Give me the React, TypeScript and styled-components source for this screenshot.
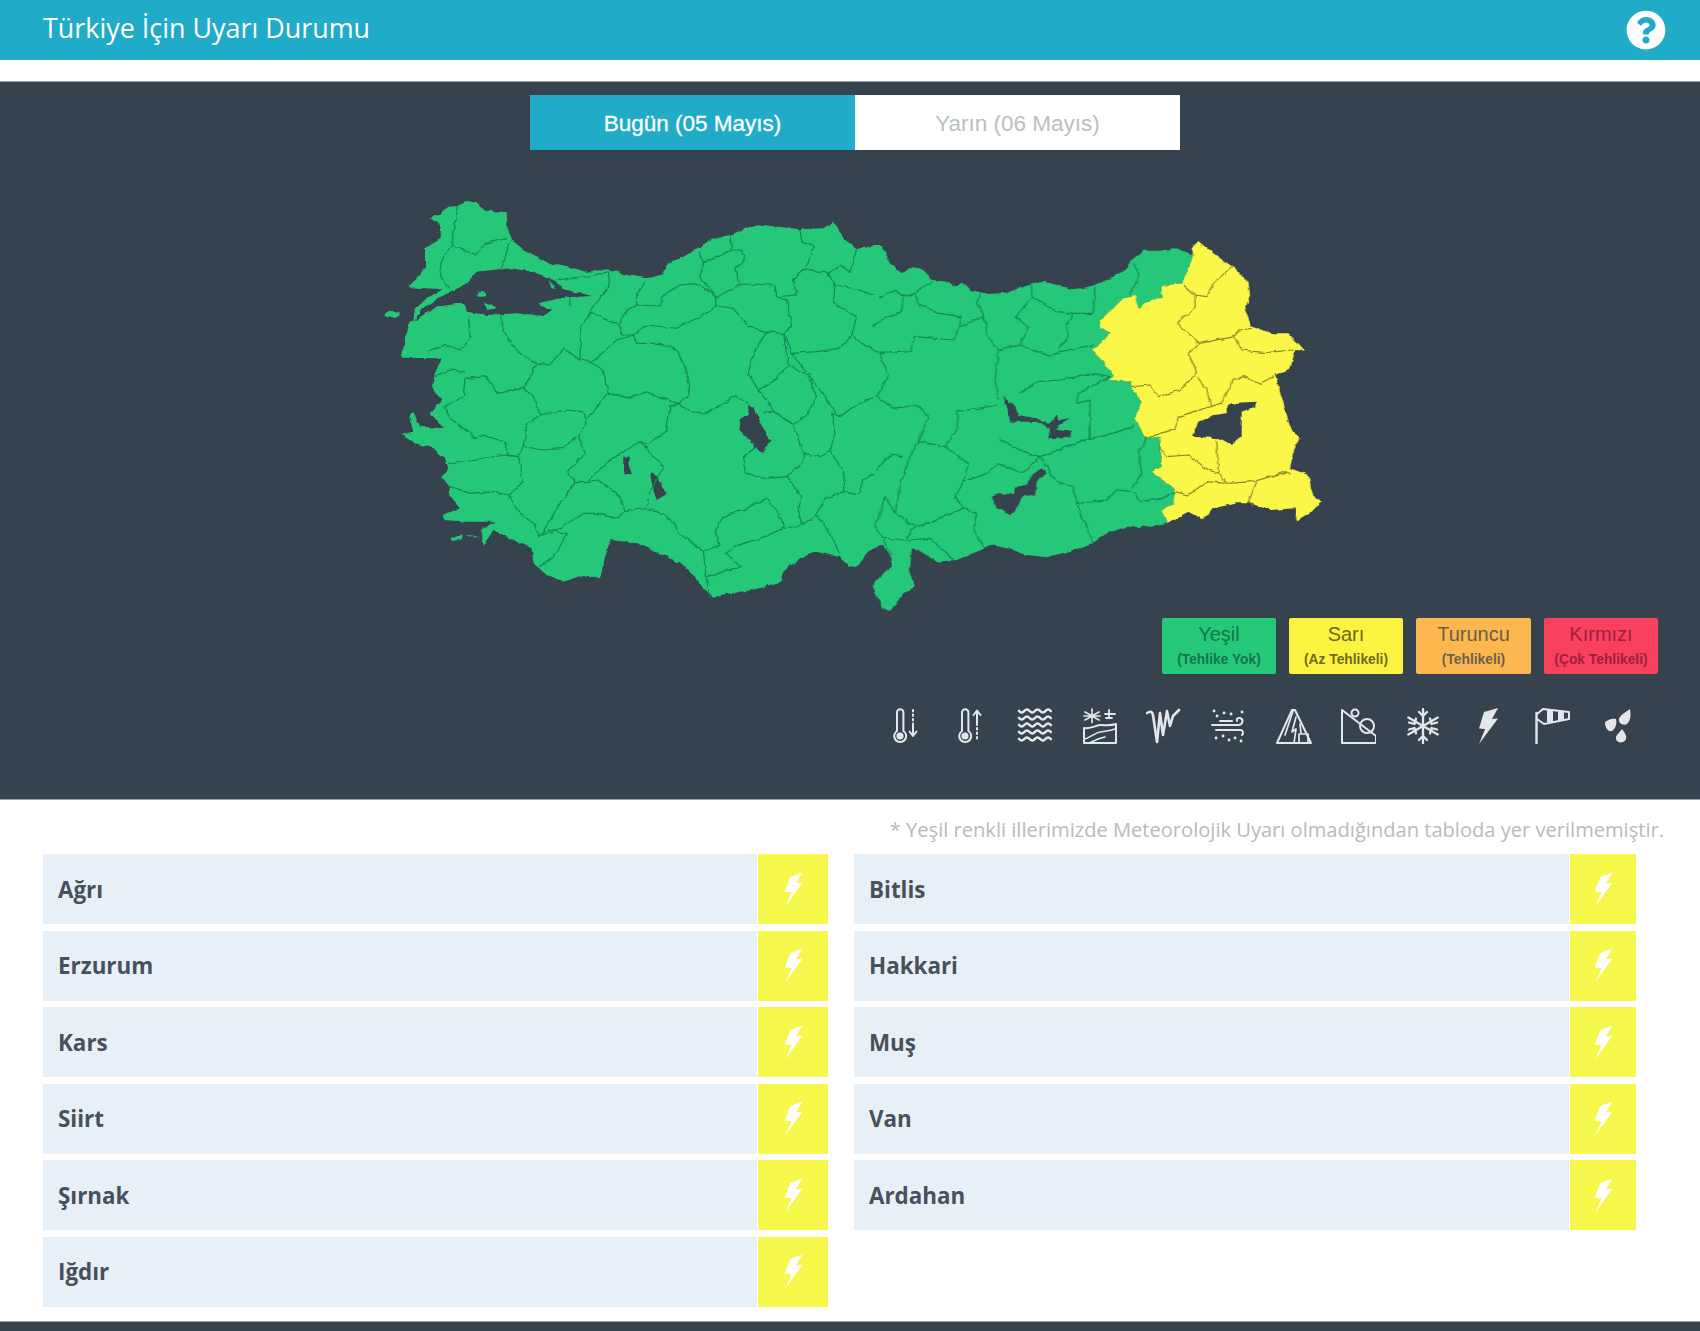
import styled, { createGlobalStyle } from "styled-components";
import { FaQuestionCircle } from "react-icons/fa";

const dark = "#37424f";

const GlobalStyle = createGlobalStyle`
  * { box-sizing: border-box; }
  html, body { margin: 0; padding: 0; background: #fff; }
  body { font-family: "Open Sans", sans-serif; width: 1700px; height: 1331px; overflow: hidden; }
`;

// outline + province lines are traced in crop coordinates, so they sit in a scaled group
const westLand =
  "M178 112 205 105 235 80 262 78 290 63 320 70 345 92 410 96 412 140 425 180 460 208 510 235 545 255 565 252 600 262 650 275 715 268 770 285 830 295 875 285 890 255 940 230 985 205 1020 180 1080 165 1160 133 1290 148 1360 145 1390 125 1405 140 1420 175 1460 208 1520 195 1540 195 1540 1095 1490 1115 1470 1155 1435 1160 1405 1130 1335 1115 1290 1135 1240 1175 1230 1205 1150 1230 1050 1245 1030 1250 1000 1225 975 1190 930 1150 870 1120 800 1090 725 1080 710 1110 690 1195 640 1185 580 1205 530 1185 490 1150 485 1105 420 1075 370 1050 340 1098 335 1050 375 1025 290 1025 225 1020 218 1005 270 985 235 945 240 920 215 895 235 865 225 835 190 805 135 790 95 765 130 755 118 710 130 695 150 740 225 745 180 700 215 660 190 630 190 590 215 535 95 533 110 450 122 430 130 420 135 385 165 358 218 328 115 322 165 265 165 205 215 175 205 130Z";

const westWater = [
  "M320 275 420 265 490 275 540 295 590 330 670 348 590 352 520 365 505 375 550 390 525 408 440 400 350 405 290 395 285 372 258 372 200 380 150 412 130 425 140 410 155 388 210 352 240 335 290 310Z",
  "M1135 675 1155 685 1165 720 1190 760 1205 780 1175 820 1155 800 1130 775 1105 750 1108 720 1135 700Z",
  "M840 880 865 890 878 925 895 940 860 960 848 925Z",
  "M760 830 780 830 775 850 785 885 768 885 760 855Z",
];

const westLines = [
  "M262 78 255 140 245 195 215 240 208 285 240 325",
  "M245 195 285 210 320 225 345 190 412 175",
  "M420 185 395 265",
  "M295 410 300 470 270 510 225 493 175 515",
  "M395 405 400 455 440 510 490 548 540 555 580 505 630 540",
  "M555 300 600 295 650 290 715 275 720 320 665 385 660 395 700 415 750 437",
  "M600 350 600 380",
  "M660 395 632 445 630 540 665 548 740 480 790 465",
  "M830 300 800 340 800 375 755 405 750 437 755 465 790 465",
  "M800 375 870 378 880 345 930 315 980 310 1040 350 1040 378 1000 405 920 445 830 435 790 465 800 490 870 490 920 510 945 560 960 640 925 670 860 650 830 635 780 655 715 640 700 570 665 548",
  "M925 670 960 695 1010 700 1060 670 1095 650 1135 670",
  "M715 640 650 720 625 770 645 820 590 875 615 905 650 905 685 900 715 920 750 950 765 995 825 985 835 960",
  "M650 905 720 840 810 785 880 860 835 945",
  "M810 785 835 795 890 750 900 680 925 670",
  "M500 555 460 625 490 650 510 705 470 735 460 800 445 830 410 825 410 790 340 765 320 775 240 715 225 680 280 650 285 595 350 590 385 640 460 625",
  "M510 705 590 690 640 695 650 720",
  "M460 800 520 810 580 805 620 770",
  "M190 590 240 570 285 575",
  "M235 850 300 840 410 825 445 830 460 905 415 945 370 935 300 940 255 925 240 920",
  "M415 945 450 1000 490 1030 510 1070 570 970 615 905",
  "M510 1070 535 1050 590 1060 560 1120 510 1160",
  "M535 1050 545 1060 640 1000 680 1000 740 1015 765 995",
  "M825 985 890 1005 930 1060 1000 1115 1008 1190 1020 1250",
  "M1000 1115 1050 1095 1035 1050 1060 1010 1130 985 1190 955 1235 1015 1240 1045 1295 1035 1285 990 1295 950 1250 890 1180 895 1130 880 1120 830 1160 800",
  "M1240 1045 1170 1075 1090 1100 1070 1120 1110 1160 1010 1190",
  "M1295 1035 1340 1005 1375 1050 1410 1120",
  "M1340 1005 1365 955 1420 935 1465 945 1480 900 1535 865",
  "M1250 890 1300 850 1300 820 1350 830 1380 815 1420 870 1425 935",
  "M1180 700 1215 695 1270 735 1300 820",
  "M1380 815 1395 760 1385 700 1410 710 1450 680 1515 650 1535 620",
  "M1165 630 1215 600 1255 555 1315 590 1340 650 1310 705 1270 735 1215 695 1165 630 1135 580 1150 520 1190 455 1240 460 1255 555",
  "M1040 378 1090 385 1135 440 1190 455",
  "M1040 350 1115 312 1215 315 1220 350 1250 360 1265 440 1240 460 1265 520 1340 515 1410 505 1445 465 1460 410 1390 370 1395 315 1375 280 1410 255 1440 275 1460 208",
  "M1265 520 1320 590 1400 700",
  "M1220 350 1280 345 1270 300 1300 265 1375 280",
  "M1290 148 1295 185 1330 200 1310 260",
  "M1080 165 1085 210 1000 250 985 215",
  "M1000 250 990 290 1040 350",
  "M1085 210 1115 210 1125 240 1095 270 1110 310",
  "M1395 315 1470 330 1535 355",
  "M1445 465 1490 500 1535 520",
];

const eastLand =
  "M40 195 60 195 75 215 90 250 125 280 160 258 190 270 215 300 260 305 290 320 308 308 330 330 385 342 440 338 515 312 550 305 590 315 640 328 690 320 740 300 790 275 815 240 850 212 900 212 950 205 1000 225 985 265 965 310 905 318 905 350 860 368 835 385 825 348 790 355 760 385 720 420 720 445 748 458 735 480 695 510 730 545 760 590 745 600 812 605 815 625 845 665 825 720 860 775 900 770 900 800 905 860 875 875 915 905 945 925 940 970 905 990 920 1030 860 1040 800 1040 740 1060 690 1095 640 1110 560 1132 500 1125 440 1105 390 1095 350 1115 290 1140 230 1145 175 1110 155 1105 150 1170 165 1220 130 1240 90 1295 65 1280 38 1215 70 1180 95 1160 90 1125 70 1095 40 1100Z";

const yellowLand =
  "M1015 183 1040 205 1080 235 1125 265 1165 305 1170 345 1155 390 1175 440 1240 460 1285 460 1315 490 1335 512 1305 510 1290 570 1245 585 1265 650 1290 740 1318 775 1300 815 1290 865 1345 885 1360 950 1385 965 1350 1000 1310 1025 1305 985 1230 990 1170 970 1130 970 1060 985 1030 1020 985 995 920 1030 905 990 940 970 945 925 915 905 875 875 905 860 900 770 860 775 825 720 845 665 815 625 812 605 745 600 760 590 730 545 695 510 735 480 748 458 720 445 720 420 760 385 790 355 825 348 835 385 860 368 905 350 905 318 965 310 985 265 1000 225 995 205Z";

const eastWater = [
  "M1100 680 1130 668 1190 665 1185 680 1145 695 1145 770 1115 795 1080 775 995 770 1015 725 1060 705 1100 700Z",
  "M430 650 465 680 475 705 530 715 565 735 590 705 595 720 630 715 595 735 590 750 635 755 630 770 565 775 570 745 530 725 470 725 450 725 445 695Z",
  "M545 865 560 880 530 905 525 950 490 945 465 990 450 1005 410 985 395 950 425 940 460 945 470 920 500 915 515 885Z",
];

const eastLines = [
  "M60 355 105 330 130 350 125 395 65 420 40 440",
  "M130 350 165 340 215 305",
  "M165 345 180 375 240 400 300 410 300 440 345 420 370 405 350 370 360 340",
  "M40 510 60 520 150 515 165 470 280 480 300 440",
  "M370 405 385 470 415 510 480 495 570 528 600 515 700 495",
  "M515 312 515 350 590 395 640 400 700 400 705 320",
  "M515 355 465 410 505 440 480 495",
  "M640 400 620 435 625 470 600 505",
  "M415 510 405 600 415 660",
  "M415 675 290 695 295 740 255 800 175 785 205 710 175 675 100 685 50 650 85 590 60 520",
  "M175 785 150 830 125 900 105 1000 165 1040 140 1075",
  "M125 830 90 825 50 870",
  "M255 800 325 850 310 905 285 950 310 985 220 1025 170 1040",
  "M310 905 380 880 410 850 490 880 540 830 660 785 725 770 820 740",
  "M415 775 490 815 540 830",
  "M480 640 530 605 600 600 700 580 750 590 655 640 650 670 690 660 690 730 690 780",
  "M540 830 590 905 640 920 650 970 740 960 770 930 820 935 840 965 910 955 945 935",
  "M860 775 835 820 845 880 815 925",
  "M650 970 700 1090",
  "M310 985 350 1000 340 1050 370 1105",
  "M45 1040 75 950 105 1000",
  "M45 1040 70 1075 140 1080 210 1075 280 1140",
  "M70 1080 95 1125",
  "M820 250 840 285 808 345",
];

const yellowLines = [
  "M1115 260 1060 310 1040 350 1005 345 970 315",
  "M1005 345 1005 385 950 430 1020 490 1120 470 1140 450 1175 445",
  "M1020 490 985 520 1010 575 1000 590 960 630 895 650 870 615 815 620",
  "M1120 470 1145 510 1215 518 1300 510",
  "M1010 590 1040 625 1052 680 955 710 945 745 860 775",
  "M1052 680 1085 670 1120 600 1150 590 1200 610 1240 590",
  "M900 800 920 830 985 825 1045 870 1075 880",
  "M1070 780 1075 880 1100 910 1180 905 1280 875 1290 885",
  "M1100 910 1040 905 985 945 945 935",
  "M1190 905 1165 965 1180 980",
];

const MapWrap = styled.svg`
  display: block;
  width: 970px;
  height: 432px;
  margin: 30px 0 0 370px;
  flex: none;
`;

const Land = styled.path<{ $fill: string }>`
  fill: ${(p) => p.$fill};
`;

const Water = styled.path`
  fill: ${dark};
`;

const Border = styled.path<{ $stroke: string }>`
  fill: none;
  stroke: ${(p) => p.$stroke};
  stroke-width: 3.6;
  stroke-linejoin: round;
`;

const TurkeyMap = () => (
  <MapWrap viewBox="370 180 970 432">
    <defs>
      <filter id="rough" x="-5%" y="-5%" width="110%" height="110%" colorInterpolationFilters="sRGB">
        <feTurbulence type="fractalNoise" baseFrequency="0.14" numOctaves="2" seed="4" result="n" />
        <feDisplacementMap in="SourceGraphic" in2="n" scale="4" xChannelSelector="R" yChannelSelector="G" />
      </filter>
    </defs>
    <g filter="url(#rough)">
      <g transform="translate(370 180) scale(0.33333)">
        <Land $fill="#25c878" d={westLand} />
        {westWater.map((d) => (
          <Water key={d} d={d} />
        ))}
        <ellipse cx="67" cy="403" rx="22" ry="10" fill="#25c878" />
        <ellipse cx="335" cy="343" rx="13" ry="7" fill="#25c878" />
        <Land $fill="#25c878" d="M345 365 385 385 350 390Z" />
        <Land $fill="#25c878" d="M535 300 560 325 545 322Z" />
        <Land $fill="#25c878" d="M238 1075 275 1066 272 1078 245 1084Z" />
        <Land $fill="#25c878" d="M292 1064 330 1072 300 1072Z" />
        {westLines.map((d) => (
          <Border key={d} $stroke="#128a58" d={d} />
        ))}
      </g>
      <g transform="translate(860 180) scale(0.33333)">
        <Land $fill="#25c878" d={eastLand} />
        <Land $fill="#fbf749" d={yellowLand} />
        {eastWater.map((d) => (
          <Water key={d} d={d} />
        ))}
        {eastLines.map((d) => (
          <Border key={d} $stroke="#128a58" d={d} />
        ))}
        {yellowLines.map((d) => (
          <Border key={d} $stroke="#8a8826" d={d} />
        ))}
      </g>
    </g>
  </MapWrap>
);

const IconSvg = styled.svg`
  width: 36px;
  height: 36px;
  flex: none;
  fill: none;
  stroke: #e4e7ea;
  stroke-width: 2;
  stroke-linecap: round;
  stroke-linejoin: round;
`;

const Solid = styled.path`
  fill: #e4e7ea;
  stroke: none;
`;

const hazardIcons = [
  // cold
  <>
    <path d="M10 23V4.5a3.2 3.2 0 0 1 6.4 0V23a6 6 0 1 1-6.4 0Z" />
    <circle cx="13" cy="28" r="2.6" fill="#e4e7ea" />
    <path d="M26 2v14" strokeDasharray="1.5 3" />
    <path d="M26 17v10M22.5 23.5 26 28l3.5-4.5" />
  </>,
  // heat
  <>
    <path d="M10 23V4.5a3.2 3.2 0 0 1 6.4 0V23a6 6 0 1 1-6.4 0Z" />
    <circle cx="13" cy="28" r="2.6" fill="#e4e7ea" />
    <path d="M25 3v14M21.5 7 25 2.5 28.5 7" />
    <path d="M25 20v12" strokeDasharray="1.5 3" />
  </>,
  // fog
  <g strokeWidth="2.6">
    {[3, 10, 17, 24, 31].map((y) => (
      <path key={y} d={`M2 ${y}q2.7 3 5.3 0t5.3 0 5.3 0 5.3 0 5.3 0 5.3 0`} />
    ))}
  </g>,
  // snow on road
  <>
    <path d="M10 1v14M3 4l14 8M17 4 3 12M2 8h16" strokeWidth="1.7" strokeDasharray="2.5 1.2" />
    <path d="M27 2v8M23 6h10M24 10h6" strokeWidth="1.8" />
    <path d="M2 35V20c8 1 12-3 17-3 5 0 9 1 15-1v19Z" />
    <path d="M3 31c6-2 10-6 15-7 5-1 10-1 15-3M9 34c5-2 9-4 14-5" strokeWidth="1.6" />
  </>,
  // icicle
  <path strokeWidth="2.6" d="M1 5c3-2 5-2 6 2l4 27 3-29 3 22 4-24 3 15 3-10 6-6" />,
  // windy
  <>
    <path d="M1 17h26c5 0 6-6 2-7-2-.5-4 1-3 3M5 22h24c3 0 4 3 2 5M9 13h12" />
    <path d="M6 8h.1M13 5h.1M20 6h.1M31 4h.1M5 30h.1M12 28h.1M18 32h.1M24 30h.1M30 33h.1M3 3h.1" strokeWidth="2.8" />
  </>,
  // avalanche
  <>
    <path d="M1 35h34L19 2h-3L1 35Z" />
    <path d="M17 3 9 27M20 9l-4 15 4-3-2 14M24 16l1 9" strokeWidth="1.7" />
    <path d="M23 26h9v9h-9z" strokeWidth="1.7" />
  </>,
  // rockfall
  <>
    <path d="M2 2v33h34V28L2 2" />
    <circle cx="27" cy="18" r="7" />
    <circle cx="15" cy="5" r="3.5" />
  </>,
  // frost
  <g strokeWidth="2.3">
    <path d="M18 1v34M3.300 9.500l29.400 17M32.700 9.500l-29.400 17" />
    <path d="m14 4 4 4 4-4M14 32l4-4 4 4M4 14.500l5.500 1.500 1.500-5.500M32 14.500 26.500 16 25 10.500M4 21.500 9.500 20l1.500 5.500M32 21.500 26.500 20 25 25.500" />
  </g>,
  // lightning
  <Solid d="M14 4 28 0 22 11l6-.5L9 36l6-15-6-.5Z" />,
  // windsock
  <>
    <path d="M2.500 5v30" strokeWidth="2.4" />
    <path d="M3 6l6-5 26 3v7L10 16l-7-5" />
    <Solid d="M13 2h6v12h-6ZM24 3.500h6v8.500h-6Z" />
  </>,
  // rain
  <>
    <Solid d="M31 1C32 7 32 12 28 16 24 18 19 15 20 11 21 7 27 4 31 1Z" />
    <Solid d="M6 14C10 11 14 10 17 11 18 15 17 20 13 23 9 24 6 20 6 14Z" />
    <Solid d="M23 21C26 25 28 28 27 31 26 35 18 36 17 31 16 28 20 25 23 21Z" />
  </>,
];

const BoltSvg = styled.svg`
  width: 19px;
  height: 35px;
  fill: #fff;
`;

const Page = styled.div`
  width: 1700px;
  height: 1331px;
  display: flex;
  flex-direction: column;
  background: #fff;
`;

const Header = styled.header`
  height: 60px;
  flex: none;
  background: #20abc8;
  color: #fff;
  display: flex;
  align-items: center;
  justify-content: space-between;
  padding: 0 34px 5px 43px;
  font-size: 26.9px;
  svg {
    margin-top: 5px;
  }
`;

const MapPanel = styled.section`
  margin-top: 21px;
  height: 719px;
  flex: none;
  background: ${dark};
  border-top: 1px solid #9aa1a8;
  border-bottom: 1px solid #9aa1a8;
  padding-top: 13px;
  display: flex;
  flex-direction: column;
`;

const Tabs = styled.div`
  display: flex;
  width: 650px;
  height: 55px;
  flex: none;
  margin-left: 530px;
`;

const Tab = styled.div<{ $active?: boolean }>`
  flex: 1;
  display: flex;
  align-items: center;
  justify-content: center;
  padding-top: 2px;
  font: 22.5px "Liberation Sans", sans-serif;
  -webkit-text-stroke: ${(p) => (p.$active ? "0.3px #fff" : "0")};
  background: ${(p) => (p.$active ? "#20abc8" : "#fff")};
  color: ${(p) => (p.$active ? "#fff" : "#b9bfc4")};
`;

const Legend = styled.div`
  display: flex;
  justify-content: flex-end;
  gap: 13px;
  padding-right: 42px;
  margin-top: 6px;
`;

const LegendItem = styled.div<{ $bg: string; $ink: string; $w: number }>`
  width: ${(p) => p.$w}px;
  height: 56px;
  border-radius: 2px;
  background: ${(p) => p.$bg};
  color: ${(p) => p.$ink};
  font-family: "Liberation Sans", sans-serif;
  text-align: center;
  padding-top: 4px;
  font-size: 20px;
  line-height: 24px;
  small {
    display: block;
    font-size: 13.8px;
    font-weight: 700;
    line-height: 28px;
  }
`;

const Icons = styled.div`
  display: flex;
  justify-content: flex-end;
  gap: 28.7px;
  padding-right: 65px;
  margin-top: 34px;
`;

const Note = styled.p`
  margin: 0;
  height: 54px;
  padding: 18px 36px 0 0;
  flex: none;
  text-align: right;
  font-size: 20.1px;
  line-height: 24px;
  color: #b4bbc1;
`;

const Alerts = styled.div`
  display: grid;
  grid-template-columns: 785px 782px;
  column-gap: 26px;
  padding-left: 43px;
  flex: 1;
`;

const AlertColumn = styled.div`
  display: flex;
  flex-direction: column;
  gap: 6.6px;
`;

const AlertRow = styled.div`
  display: flex;
  gap: 1px;
  height: 70px;
`;

const City = styled.div`
  flex: 1;
  display: flex;
  align-items: center;
  padding-left: 15px;
  background: #e7f0f7;
  color: #47505c;
  font-size: 22.4px;
  font-weight: 700;
`;

const LevelCell = styled.div<{ $w: number }>`
  width: ${(p) => p.$w}px;
  flex: none;
  display: flex;
  align-items: center;
  justify-content: center;
  background: #f6f84b;
`;

const Footer = styled.footer`
  height: 10px;
  flex: none;
  background: ${dark};
  border-top: 1px solid #9aa1a8;
`;

const levels = [
  { name: "Yeşil", sub: "(Tehlike Yok)", bg: "#25c878", ink: "#14754f", w: 114 },
  { name: "Sarı", sub: "(Az Tehlikeli)", bg: "#fbf33f", ink: "#6f6a1c", w: 114 },
  { name: "Turuncu", sub: "(Tehlikeli)", bg: "#fdb74f", ink: "#6b5f4a", w: 115 },
  { name: "Kırmızı", sub: "(Çok Tehlikeli)", bg: "#f8405f", ink: "#a0203f", w: 114 },
];

const columns = [
  { cellWidth: 70, cities: ["Ağrı", "Erzurum", "Kars", "Siirt", "Şırnak", "Iğdır"] },
  { cellWidth: 66, cities: ["Bitlis", "Hakkari", "Muş", "Van", "Ardahan"] },
];

const App = () => {
  return (
    <Page>
      <GlobalStyle />
      <Header>
        <span>Türkiye İçin Uyarı Durumu</span>
        <FaQuestionCircle size={40} />
      </Header>
      <MapPanel>
        <Tabs>
          <Tab $active>Bugün (05 Mayıs)</Tab>
          <Tab>Yarın (06 Mayıs)</Tab>
        </Tabs>
        <TurkeyMap />
        <Legend>
          {levels.map((l) => (
            <LegendItem key={l.name} $bg={l.bg} $ink={l.ink} $w={l.w}>
              {l.name}
              <small>{l.sub}</small>
            </LegendItem>
          ))}
        </Legend>
        <Icons>
          {hazardIcons.map((icon, i) => (
            <IconSvg key={i} viewBox="0 0 36 36">
              {icon}
            </IconSvg>
          ))}
        </Icons>
      </MapPanel>
      <Note>* Yeşil renkli illerimizde Meteorolojik Uyarı olmadığından tabloda yer verilmemiştir.</Note>
      <Alerts>
        {columns.map((col) => (
          <AlertColumn key={col.cellWidth}>
            {col.cities.map((city) => (
              <AlertRow key={city}>
                <City>{city}</City>
                <LevelCell $w={col.cellWidth}>
                  <BoltSvg viewBox="0 0 60 107">
                    <path d="M20 14 58 0 38 34 58 32 4 107 24 62 2 60Z" />
                  </BoltSvg>
                </LevelCell>
              </AlertRow>
            ))}
          </AlertColumn>
        ))}
      </Alerts>
      <Footer />
    </Page>
  );
};

export default App;
